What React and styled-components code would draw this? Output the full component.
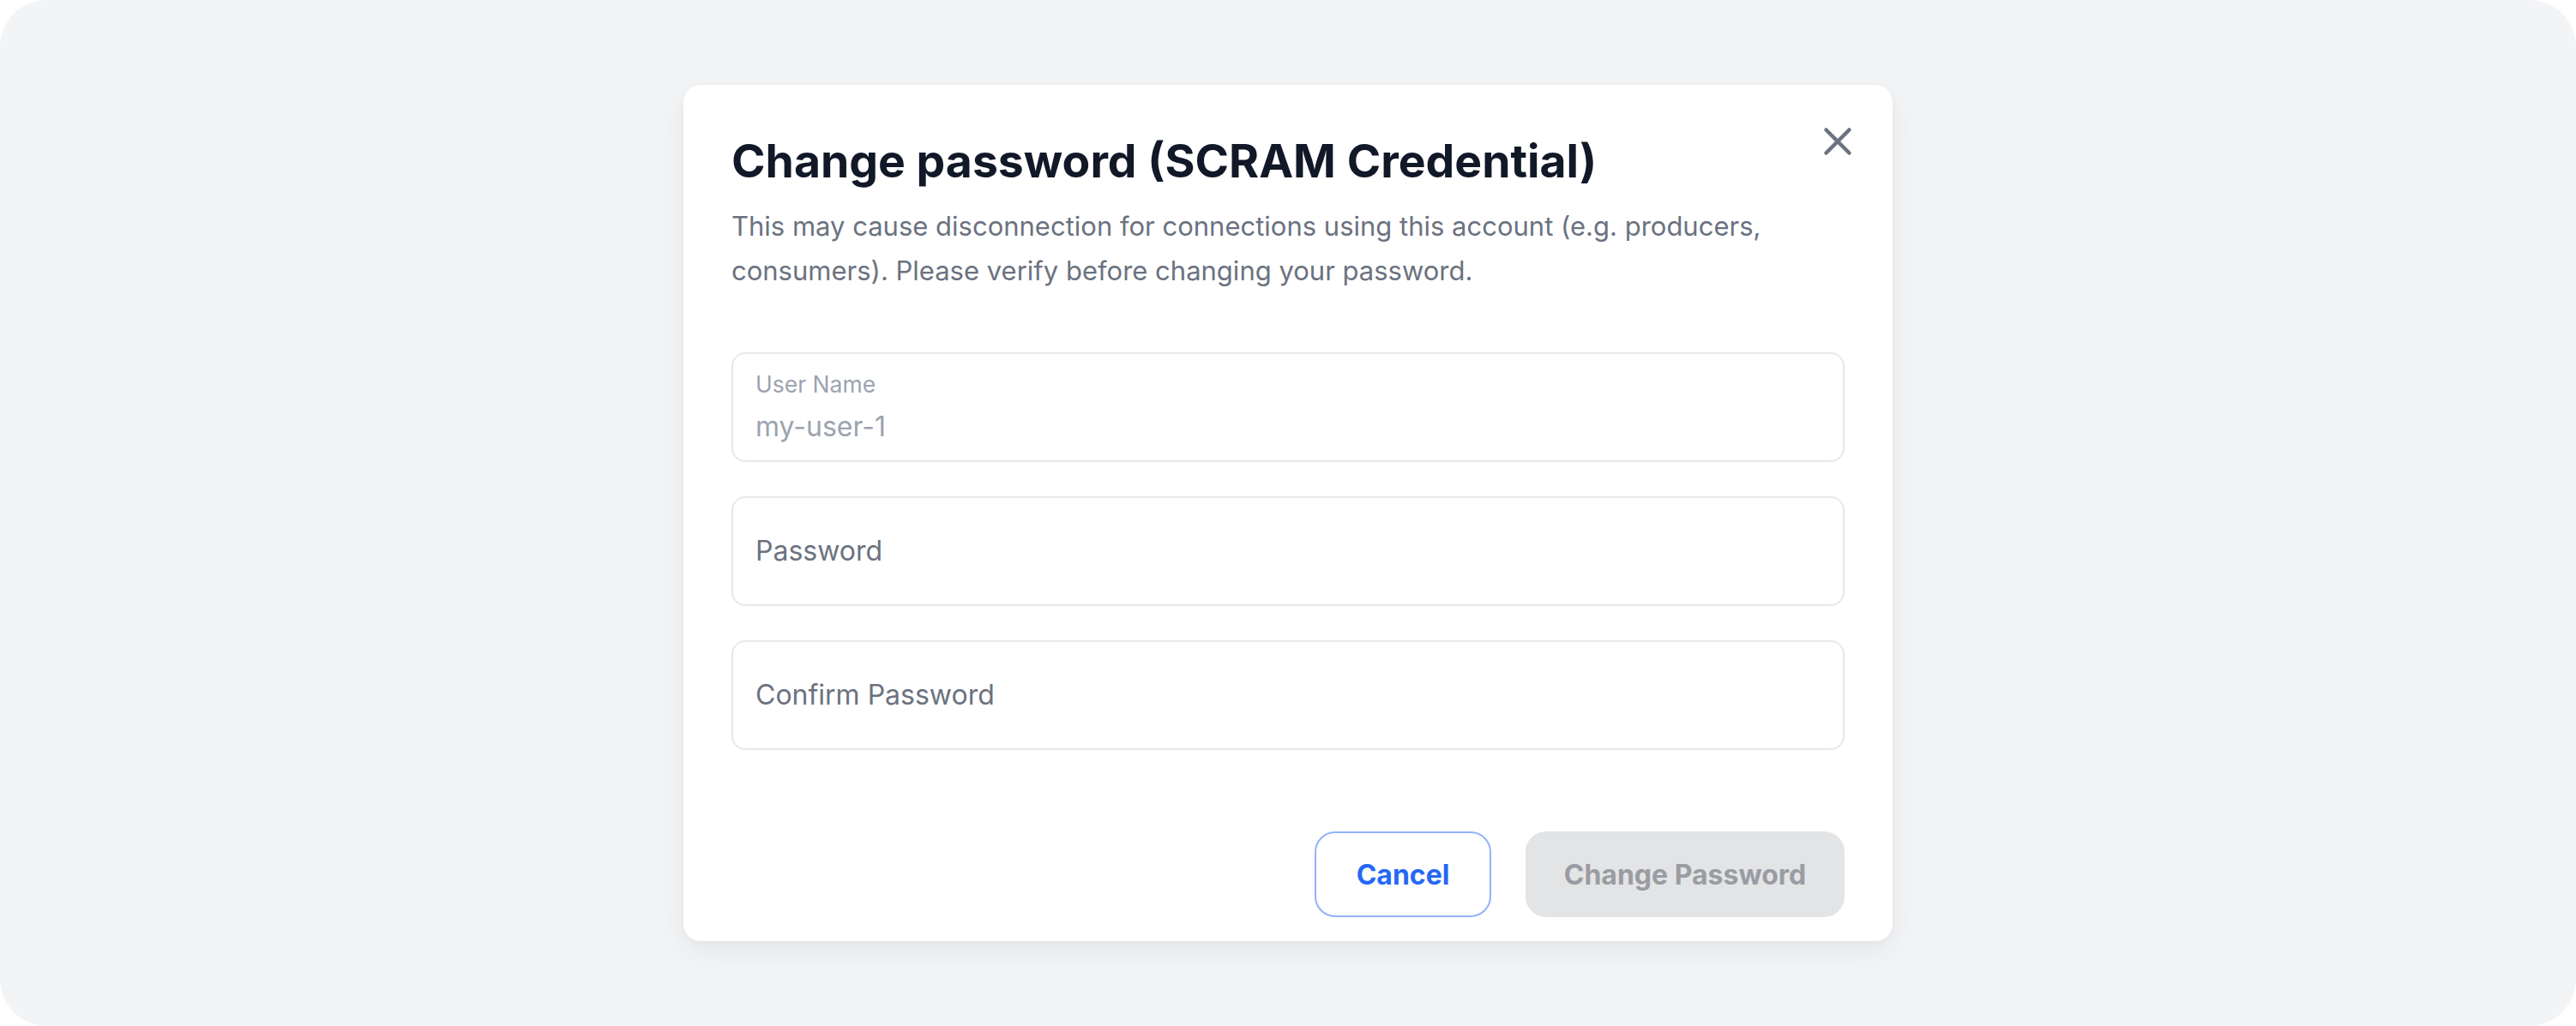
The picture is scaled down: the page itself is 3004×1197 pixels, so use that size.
import styled, { createGlobalStyle } from 'styled-components'
import { X } from 'lucide-react'

const GlobalStyle = createGlobalStyle`
  html, body {
    margin: 0;
    padding: 0;
    background: #ffffff;
  }
  body {
    font-family: Inter, "Noto Sans", "Liberation Sans", sans-serif;
  }
  * {
    box-sizing: border-box;
  }
`

const Page = styled.div`
  width: 3004px;
  height: 1197px;
  background: #f3f4f6;
  border-radius: 55px;
  display: flex;
  align-items: center;
  justify-content: center;
`

const Modal = styled.div`
  position: relative;
  width: 1410px;
  background: #ffffff;
  border-radius: 20px;
  padding: 59px 56px 28px;
  box-shadow: 0 12px 36px rgba(17, 24, 39, 0.06), 0 2px 8px rgba(17, 24, 39, 0.03);
  display: flex;
  flex-direction: column;
`

const CloseButton = styled.button`
  position: absolute;
  top: 39px;
  right: 37px;
  width: 54px;
  height: 54px;
  padding: 0;
  border: none;
  background: transparent;
  color: #6b7280;
  display: flex;
  align-items: center;
  justify-content: center;
  cursor: pointer;
`

const Title = styled.h2`
  margin: 0;
  font-size: 53.5px;
  line-height: 60px;
  font-weight: 700;
  color: #111827;
`

const Description = styled.p`
  margin: 20px 0 0;
  font-size: 31px;
  line-height: 52px;
  color: #6b7280;
  max-width: 1260px;
`

const Fields = styled.div`
  margin-top: 69px;
  display: flex;
  flex-direction: column;
  gap: 40px;
`

const Field = styled.div`
  height: 128px;
  border: 2px solid #e5e7eb;
  border-radius: 16px;
  padding: 0 26px;
  display: flex;
  flex-direction: column;
  justify-content: center;
  background: #ffffff;
`

const SmallLabel = styled.span`
  font-size: 26.5px;
  line-height: 32px;
  color: #9ca3af;
`

const Value = styled.span`
  margin-top: 14px;
  font-size: 32px;
  line-height: 40px;
  color: ${props => (props.$disabled ? '#9ca3af' : '#111827')};
`

const Placeholder = styled.span`
  font-size: 32px;
  line-height: 40px;
  color: #6b7280;
`

const Footer = styled.div`
  margin-top: 95px;
  display: flex;
  justify-content: flex-end;
  gap: 40px;
`

const Button = styled.button`
  height: 100px;
  padding: 0 24px;
  min-width: ${props => (props.$primary ? '372px' : '206px')};
  border-radius: 24px;
  font-family: inherit;
  font-size: 32px;
  font-weight: 700;
  border: 2px solid ${props => (props.$primary ? '#e3e4e6' : '#93b2fb')};
  background: ${props => (props.$primary ? '#e3e4e6' : '#ffffff')};
  color: ${props => (props.$primary ? '#9a9ca2' : '#2568f6')};
  cursor: ${props => (props.$primary ? 'not-allowed' : 'pointer')};
`

const App = () => {
  return (
    <>
      <GlobalStyle />
      <Page>
        <Modal>
          <CloseButton aria-label='Close'>
            <X size={54} strokeWidth={2} />
          </CloseButton>
          <Title>Change password (SCRAM Credential)</Title>
          <Description>
            This may cause disconnection for connections using this account (e.g. producers,
            consumers). Please verify before changing your password.
          </Description>
          <Fields>
            <Field>
              <SmallLabel>User Name</SmallLabel>
              <Value $disabled>my-user-1</Value>
            </Field>
            <Field>
              <Placeholder>Password</Placeholder>
            </Field>
            <Field>
              <Placeholder>Confirm Password</Placeholder>
            </Field>
          </Fields>
          <Footer>
            <Button>Cancel</Button>
            <Button $primary disabled>Change Password</Button>
          </Footer>
        </Modal>
      </Page>
    </>
  )
}

export default App
